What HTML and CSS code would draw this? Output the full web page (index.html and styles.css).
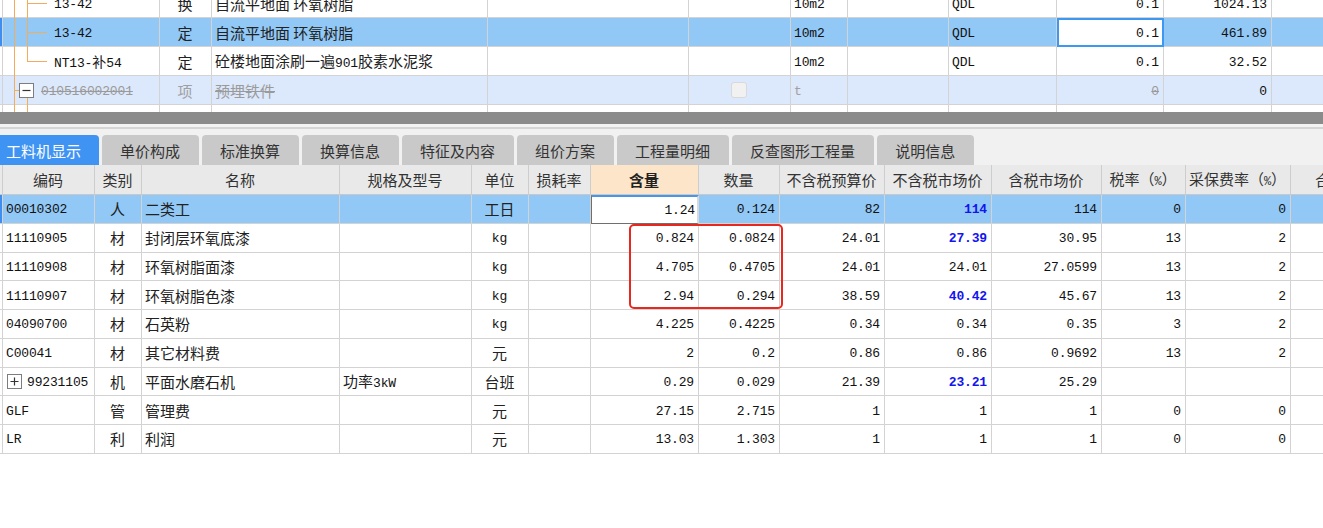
FILE: index.html
```html
<!DOCTYPE html>
<html lang="zh-CN">
<head>
<meta charset="utf-8">
<title>工料机显示</title>
<link rel="stylesheet" href="styles.css">
</head>
<body>
<div class="top">
  <div class="top-inner">
    <div class="trow">
      <div class="c c0"></div>
      <div class="c ca tree"><span class="tv1 full"></span><span class="tv2 full"></span><span class="th"></span><span class="n code">13-42</span></div>
      <div class="c ctr">换</div>
      <div class="c">自流平地面 环氧树脂</div>
      <div class="c"></div>
      <div class="c"></div>
      <div class="c"><span class="n">10m2</span></div>
      <div class="c"></div>
      <div class="c"><span class="n">QDL</span></div>
      <div class="c r"><span class="n">0.1</span></div>
      <div class="c r"><span class="n">1024.13</span></div>
      <div class="c"></div>
    </div>
    <div class="trow sel">
      <div class="c c0 mark"></div>
      <div class="c ca tree"><span class="tv1 full"></span><span class="tv2 full"></span><span class="th"></span><span class="n code">13-42</span></div>
      <div class="c ctr">定</div>
      <div class="c">自流平地面 环氧树脂</div>
      <div class="c"></div>
      <div class="c"></div>
      <div class="c"><span class="n">10m2</span></div>
      <div class="c"></div>
      <div class="c"><span class="n">QDL</span></div>
      <div class="c r edit-top"><span class="n">0.1</span></div>
      <div class="c r"><span class="n">461.89</span></div>
      <div class="c"></div>
    </div>
    <div class="trow">
      <div class="c c0"></div>
      <div class="c ca tree"><span class="tv1 full"></span><span class="tv2 half"></span><span class="th"></span><span class="t"><span class="n">NT13-</span><span class="code2">补</span><span class="n">54</span></span></div>
      <div class="c ctr">定</div>
      <div class="c"><span class="t">砼楼地面涂刷一遍<span class="n">901</span>胶素水泥浆</span></div>
      <div class="c"></div>
      <div class="c"></div>
      <div class="c"><span class="n">10m2</span></div>
      <div class="c"></div>
      <div class="c"><span class="n">QDL</span></div>
      <div class="c r"><span class="n">0.1</span></div>
      <div class="c r"><span class="n">32.52</span></div>
      <div class="c"></div>
    </div>
    <div class="trow item">
      <div class="c c0"></div>
      <div class="c cb tree"><span class="tv1 full"></span><span class="tv2 below"></span><span class="th short"></span>
        <svg class="box" width="15" height="15" viewBox="0 0 15 15"><rect x="0.5" y="0.5" width="14" height="14" fill="#fff" stroke="#7d7d7d"/><path d="M3.5 7.5h8" stroke="#333" stroke-width="1.2"/></svg>
        <span class="n del">010516002001</span></div>
      <div class="c ctr gray">项</div>
      <div class="c"><span class="del">预埋铁件</span></div>
      <div class="c"></div>
      <div class="c ctr"><span class="chk"></span></div>
      <div class="c"><span class="n gray">t</span></div>
      <div class="c"></div>
      <div class="c"></div>
      <div class="c r"><span class="n del">0</span></div>
      <div class="c r"><span class="n">0</span></div>
      <div class="c"></div>
    </div>
    <div class="trow">
      <div class="c c0"></div>
      <div class="c ca tree"><span class="tv1 full"></span><span class="tv2 full"></span></div>
      <div class="c"></div>
      <div class="c"></div>
      <div class="c"></div>
      <div class="c"></div>
      <div class="c"></div>
      <div class="c"></div>
      <div class="c"></div>
      <div class="c"></div>
      <div class="c"></div>
      <div class="c"></div>
    </div>
  </div>
</div>

<div class="splitter"></div>

<div class="tabbar">
  <div class="tab active">工料机显示</div>
  <div class="tab">单价构成</div>
  <div class="tab">标准换算</div>
  <div class="tab">换算信息</div>
  <div class="tab">特征及内容</div>
  <div class="tab">组价方案</div>
  <div class="tab">工程量明细</div>
  <div class="tab">反查图形工程量</div>
  <div class="tab">说明信息</div>
</div>

<div class="grid-wrap">
  <div class="brow head">
    <div class="c c0"></div>
    <div class="c ctr">编码</div>
    <div class="c ctr">类别</div>
    <div class="c ctr">名称</div>
    <div class="c ctr">规格及型号</div>
    <div class="c ctr">单位</div>
    <div class="c ctr">损耗率</div>
    <div class="c ctr hl">含量</div>
    <div class="c ctr">数量</div>
    <div class="c ctr">不含税预算价</div>
    <div class="c ctr">不含税市场价</div>
    <div class="c ctr">含税市场价</div>
    <div class="c ctr"><span class="t">税率（<span class="pct">%</span>）</span></div>
    <div class="c ctr"><span class="t">采保费率（<span class="pct">%</span>）</span></div>
    <div class="c ctr">合价</div>
  </div>

  <div class="brow sel">
    <div class="c c0 mark"></div>
    <div class="c"><span class="n">00010302</span></div>
    <div class="c ctr">人</div>
    <div class="c">二类工</div>
    <div class="c"></div>
    <div class="c ctr">工日</div>
    <div class="c"></div>
    <div class="c r edit-bot"><span class="n">1.24</span></div>
    <div class="c r"><span class="n">0.124</span></div>
    <div class="c r"><span class="n">82</span></div>
    <div class="c r"><span class="n blue">114</span></div>
    <div class="c r"><span class="n">114</span></div>
    <div class="c r"><span class="n">0</span></div>
    <div class="c r"><span class="n">0</span></div>
    <div class="c"></div>
  </div>

  <div class="brow">
    <div class="c c0"></div>
    <div class="c"><span class="n">11110905</span></div>
    <div class="c ctr">材</div>
    <div class="c">封闭层环氧底漆</div>
    <div class="c"></div>
    <div class="c ctr"><span class="n">kg</span></div>
    <div class="c"></div>
    <div class="c r"><span class="n">0.824</span></div>
    <div class="c r"><span class="n">0.0824</span></div>
    <div class="c r"><span class="n">24.01</span></div>
    <div class="c r"><span class="n blue">27.39</span></div>
    <div class="c r"><span class="n">30.95</span></div>
    <div class="c r"><span class="n">13</span></div>
    <div class="c r"><span class="n">2</span></div>
    <div class="c"></div>
  </div>

  <div class="brow">
    <div class="c c0"></div>
    <div class="c"><span class="n">11110908</span></div>
    <div class="c ctr">材</div>
    <div class="c">环氧树脂面漆</div>
    <div class="c"></div>
    <div class="c ctr"><span class="n">kg</span></div>
    <div class="c"></div>
    <div class="c r"><span class="n">4.705</span></div>
    <div class="c r"><span class="n">0.4705</span></div>
    <div class="c r"><span class="n">24.01</span></div>
    <div class="c r"><span class="n">24.01</span></div>
    <div class="c r"><span class="n">27.0599</span></div>
    <div class="c r"><span class="n">13</span></div>
    <div class="c r"><span class="n">2</span></div>
    <div class="c"></div>
  </div>

  <div class="brow">
    <div class="c c0"></div>
    <div class="c"><span class="n">11110907</span></div>
    <div class="c ctr">材</div>
    <div class="c">环氧树脂色漆</div>
    <div class="c"></div>
    <div class="c ctr"><span class="n">kg</span></div>
    <div class="c"></div>
    <div class="c r"><span class="n">2.94</span></div>
    <div class="c r"><span class="n">0.294</span></div>
    <div class="c r"><span class="n">38.59</span></div>
    <div class="c r"><span class="n blue">40.42</span></div>
    <div class="c r"><span class="n">45.67</span></div>
    <div class="c r"><span class="n">13</span></div>
    <div class="c r"><span class="n">2</span></div>
    <div class="c"></div>
  </div>

  <div class="brow">
    <div class="c c0"></div>
    <div class="c"><span class="n">04090700</span></div>
    <div class="c ctr">材</div>
    <div class="c">石英粉</div>
    <div class="c"></div>
    <div class="c ctr"><span class="n">kg</span></div>
    <div class="c"></div>
    <div class="c r"><span class="n">4.225</span></div>
    <div class="c r"><span class="n">0.4225</span></div>
    <div class="c r"><span class="n">0.34</span></div>
    <div class="c r"><span class="n">0.34</span></div>
    <div class="c r"><span class="n">0.35</span></div>
    <div class="c r"><span class="n">3</span></div>
    <div class="c r"><span class="n">2</span></div>
    <div class="c"></div>
  </div>

  <div class="brow">
    <div class="c c0"></div>
    <div class="c"><span class="n">C00041</span></div>
    <div class="c ctr">材</div>
    <div class="c">其它材料费</div>
    <div class="c"></div>
    <div class="c ctr">元</div>
    <div class="c"></div>
    <div class="c r"><span class="n">2</span></div>
    <div class="c r"><span class="n">0.2</span></div>
    <div class="c r"><span class="n">0.86</span></div>
    <div class="c r"><span class="n">0.86</span></div>
    <div class="c r"><span class="n">0.9692</span></div>
    <div class="c r"><span class="n">13</span></div>
    <div class="c r"><span class="n">2</span></div>
    <div class="c"></div>
  </div>

  <div class="brow">
    <div class="c c0"></div>
    <div class="c expand">
      <svg class="box" width="15" height="15" viewBox="0 0 15 15"><rect x="0.5" y="0.5" width="14" height="14" fill="#fff" stroke="#7d7d7d"/><path d="M3.5 7.5h8M7.5 3.5v8" stroke="#333" stroke-width="1.2"/></svg>
      <span class="n">99231105</span></div>
    <div class="c ctr">机</div>
    <div class="c">平面水磨石机</div>
    <div class="c"><span class="t">功率<span class="n">3kW</span></span></div>
    <div class="c ctr">台班</div>
    <div class="c"></div>
    <div class="c r"><span class="n">0.29</span></div>
    <div class="c r"><span class="n">0.029</span></div>
    <div class="c r"><span class="n">21.39</span></div>
    <div class="c r"><span class="n blue">23.21</span></div>
    <div class="c r"><span class="n">25.29</span></div>
    <div class="c r"></div>
    <div class="c r"></div>
    <div class="c"></div>
  </div>

  <div class="brow">
    <div class="c c0"></div>
    <div class="c"><span class="n">GLF</span></div>
    <div class="c ctr">管</div>
    <div class="c">管理费</div>
    <div class="c"></div>
    <div class="c ctr">元</div>
    <div class="c"></div>
    <div class="c r"><span class="n">27.15</span></div>
    <div class="c r"><span class="n">2.715</span></div>
    <div class="c r"><span class="n">1</span></div>
    <div class="c r"><span class="n">1</span></div>
    <div class="c r"><span class="n">1</span></div>
    <div class="c r"><span class="n">0</span></div>
    <div class="c r"><span class="n">0</span></div>
    <div class="c"></div>
  </div>

  <div class="brow">
    <div class="c c0"></div>
    <div class="c"><span class="n">LR</span></div>
    <div class="c ctr">利</div>
    <div class="c">利润</div>
    <div class="c"></div>
    <div class="c ctr">元</div>
    <div class="c"></div>
    <div class="c r"><span class="n">13.03</span></div>
    <div class="c r"><span class="n">1.303</span></div>
    <div class="c r"><span class="n">1</span></div>
    <div class="c r"><span class="n">1</span></div>
    <div class="c r"><span class="n">1</span></div>
    <div class="c r"><span class="n">0</span></div>
    <div class="c r"><span class="n">0</span></div>
    <div class="c"></div>
  </div>

  <div class="redbox"></div>
</div>
</body>
</html>
```

FILE: styles.css
```css
html, body {
  margin: 0;
  padding: 0;
  width: 1323px;
  height: 528px;
  overflow: hidden;
  background: #fff;
}

body {
  font-family: "Noto Sans CJK SC", "Microsoft YaHei", sans-serif;
  font-size: 15px;
  color: #222;
}

.n {
  font-family: "Liberation Mono", "DejaVu Sans Mono", monospace;
  font-size: 13px;
  letter-spacing: -0.15px;
  color: #111;
}

.c > .n {
  margin-top: 2px;
}

.t {
  white-space: nowrap;
}

/* ---------- upper tree grid ---------- */
.top {
  height: 112px;
  overflow: hidden;
}

.top-inner {
  margin-top: -11px;
}

.trow {
  display: grid;
  grid-template-columns: 3px 157px 52px 276px 201px 102px 57px 101px 108px 107px 108px 60px;
  height: 29px;
}

.c {
  box-sizing: border-box;
  display: flex;
  align-items: center;
  white-space: nowrap;
  overflow: hidden;
  padding: 0 4px 0 3px;
  border-right: 1px solid #d3d3d3;
  border-bottom: 1px solid #d3d3d3;
  line-height: 1;
}

.c0 {
  padding: 0;
}

.r { justify-content: flex-end; }
.ctr { justify-content: center; }

.trow.sel { background: #91c8f6; }
.trow.item { background: #dce8fb; }

.mark {
  box-shadow: inset 2px 0 0 #3d8ef0;
}

.tree {
  position: relative;
  overflow: visible;
}

.ca { padding-left: 51px; }
.cb { padding-left: 16px; }

.tree .tv1,
.tree .tv2,
.tree .th {
  position: absolute;
  background: #f2ad5c;
}

.tree .tv1 { left: 11px; width: 1px; top: -1px; bottom: -1px; }
.tree .tv2 { left: 24px; width: 1px; }
.tree .tv2.full { top: -1px; bottom: -1px; }
.tree .tv2.half { top: -1px; height: 15px; }
.tree .tv2.below { top: 21px; bottom: -1px; }
.tree .th { left: 24px; width: 20px; height: 1px; top: 14px; }
.tree .th.short { left: 11px; width: 5px; }

.code2 { font-size: 14px; }

.box {
  flex: none;
  position: relative;
  margin-right: 7px;
}

.del {
  color: #9a9a9a;
  text-decoration: line-through;
}

.gray { color: #a0a0a0; }

.chk {
  display: block;
  width: 14px;
  height: 14px;
  border: 1px solid #d9d9d9;
  border-radius: 3px;
  background: #f1f1f1;
}

.edit-top {
  background: #fff;
  border: 2px solid #3d98f2;
  padding-right: 3px;
}

/* ---------- splitter & tabs ---------- */
.splitter {
  height: 12px;
  background: #8b8b8b;
  border-bottom: 3px solid #f3f3f3;
}

.tabbar {
  display: flex;
  gap: 3px;
  align-items: flex-end;
  height: 38px;
  box-sizing: border-box;
  padding-top: 8px;
  background: #f1f1f1;
  border-top: 2px solid #d5d5d5;
}

.tab {
  height: 30px;
  box-sizing: border-box;
  display: flex;
  align-items: center;
  padding: 0 19px 0 18px;
  background: #c9c9c9;
  color: #333;
  border-radius: 4px 4px 0 0;
  white-space: nowrap;
}

.tab.active {
  background: #3f94f3;
  color: #fff;
  padding: 0 18px 0 6px;
  border-radius: 0 4px 0 0;
}

/* ---------- lower resource grid ---------- */
.grid-wrap {
  position: relative;
  width: 1400px;
}

.brow {
  display: grid;
  grid-template-columns: 3px 92px 47px 198px 132px 57px 62px 108px 81px 105px 107px 110px 84px 105px 80px;
  height: 28.75px;
}

.brow.head {
  height: 30px;
  background: #e9e9e9;
  color: #333;
}

.brow.head .c {
  border-right-color: #cdcdcd;
  border-bottom-color: #c8c8c8;
}

.brow.head .hl {
  background: #fde5c9;
  font-weight: 700;
  color: #222;
}

.pct {
  font-family: "Liberation Mono", monospace;
  font-size: 12px;
}

.brow.sel { background: #91c8f6; }

.expand { padding-left: 4px; }
.expand .box { margin-right: 5px; }

.edit-bot {
  background: #fff;
  border: 1px solid #6f6f6f;
  border-top: 2px solid #4a95e6;
  border-right: 2px solid #d9d9d9;
  padding-right: 2px;
}

.blue {
  color: #1414f0;
  font-weight: 700;
}

.redbox {
  position: absolute;
  left: 629px;
  top: 59px;
  width: 154px;
  height: 85px;
  box-sizing: border-box;
  border: 2px solid #e6281e;
  border-radius: 5px;
}
```
